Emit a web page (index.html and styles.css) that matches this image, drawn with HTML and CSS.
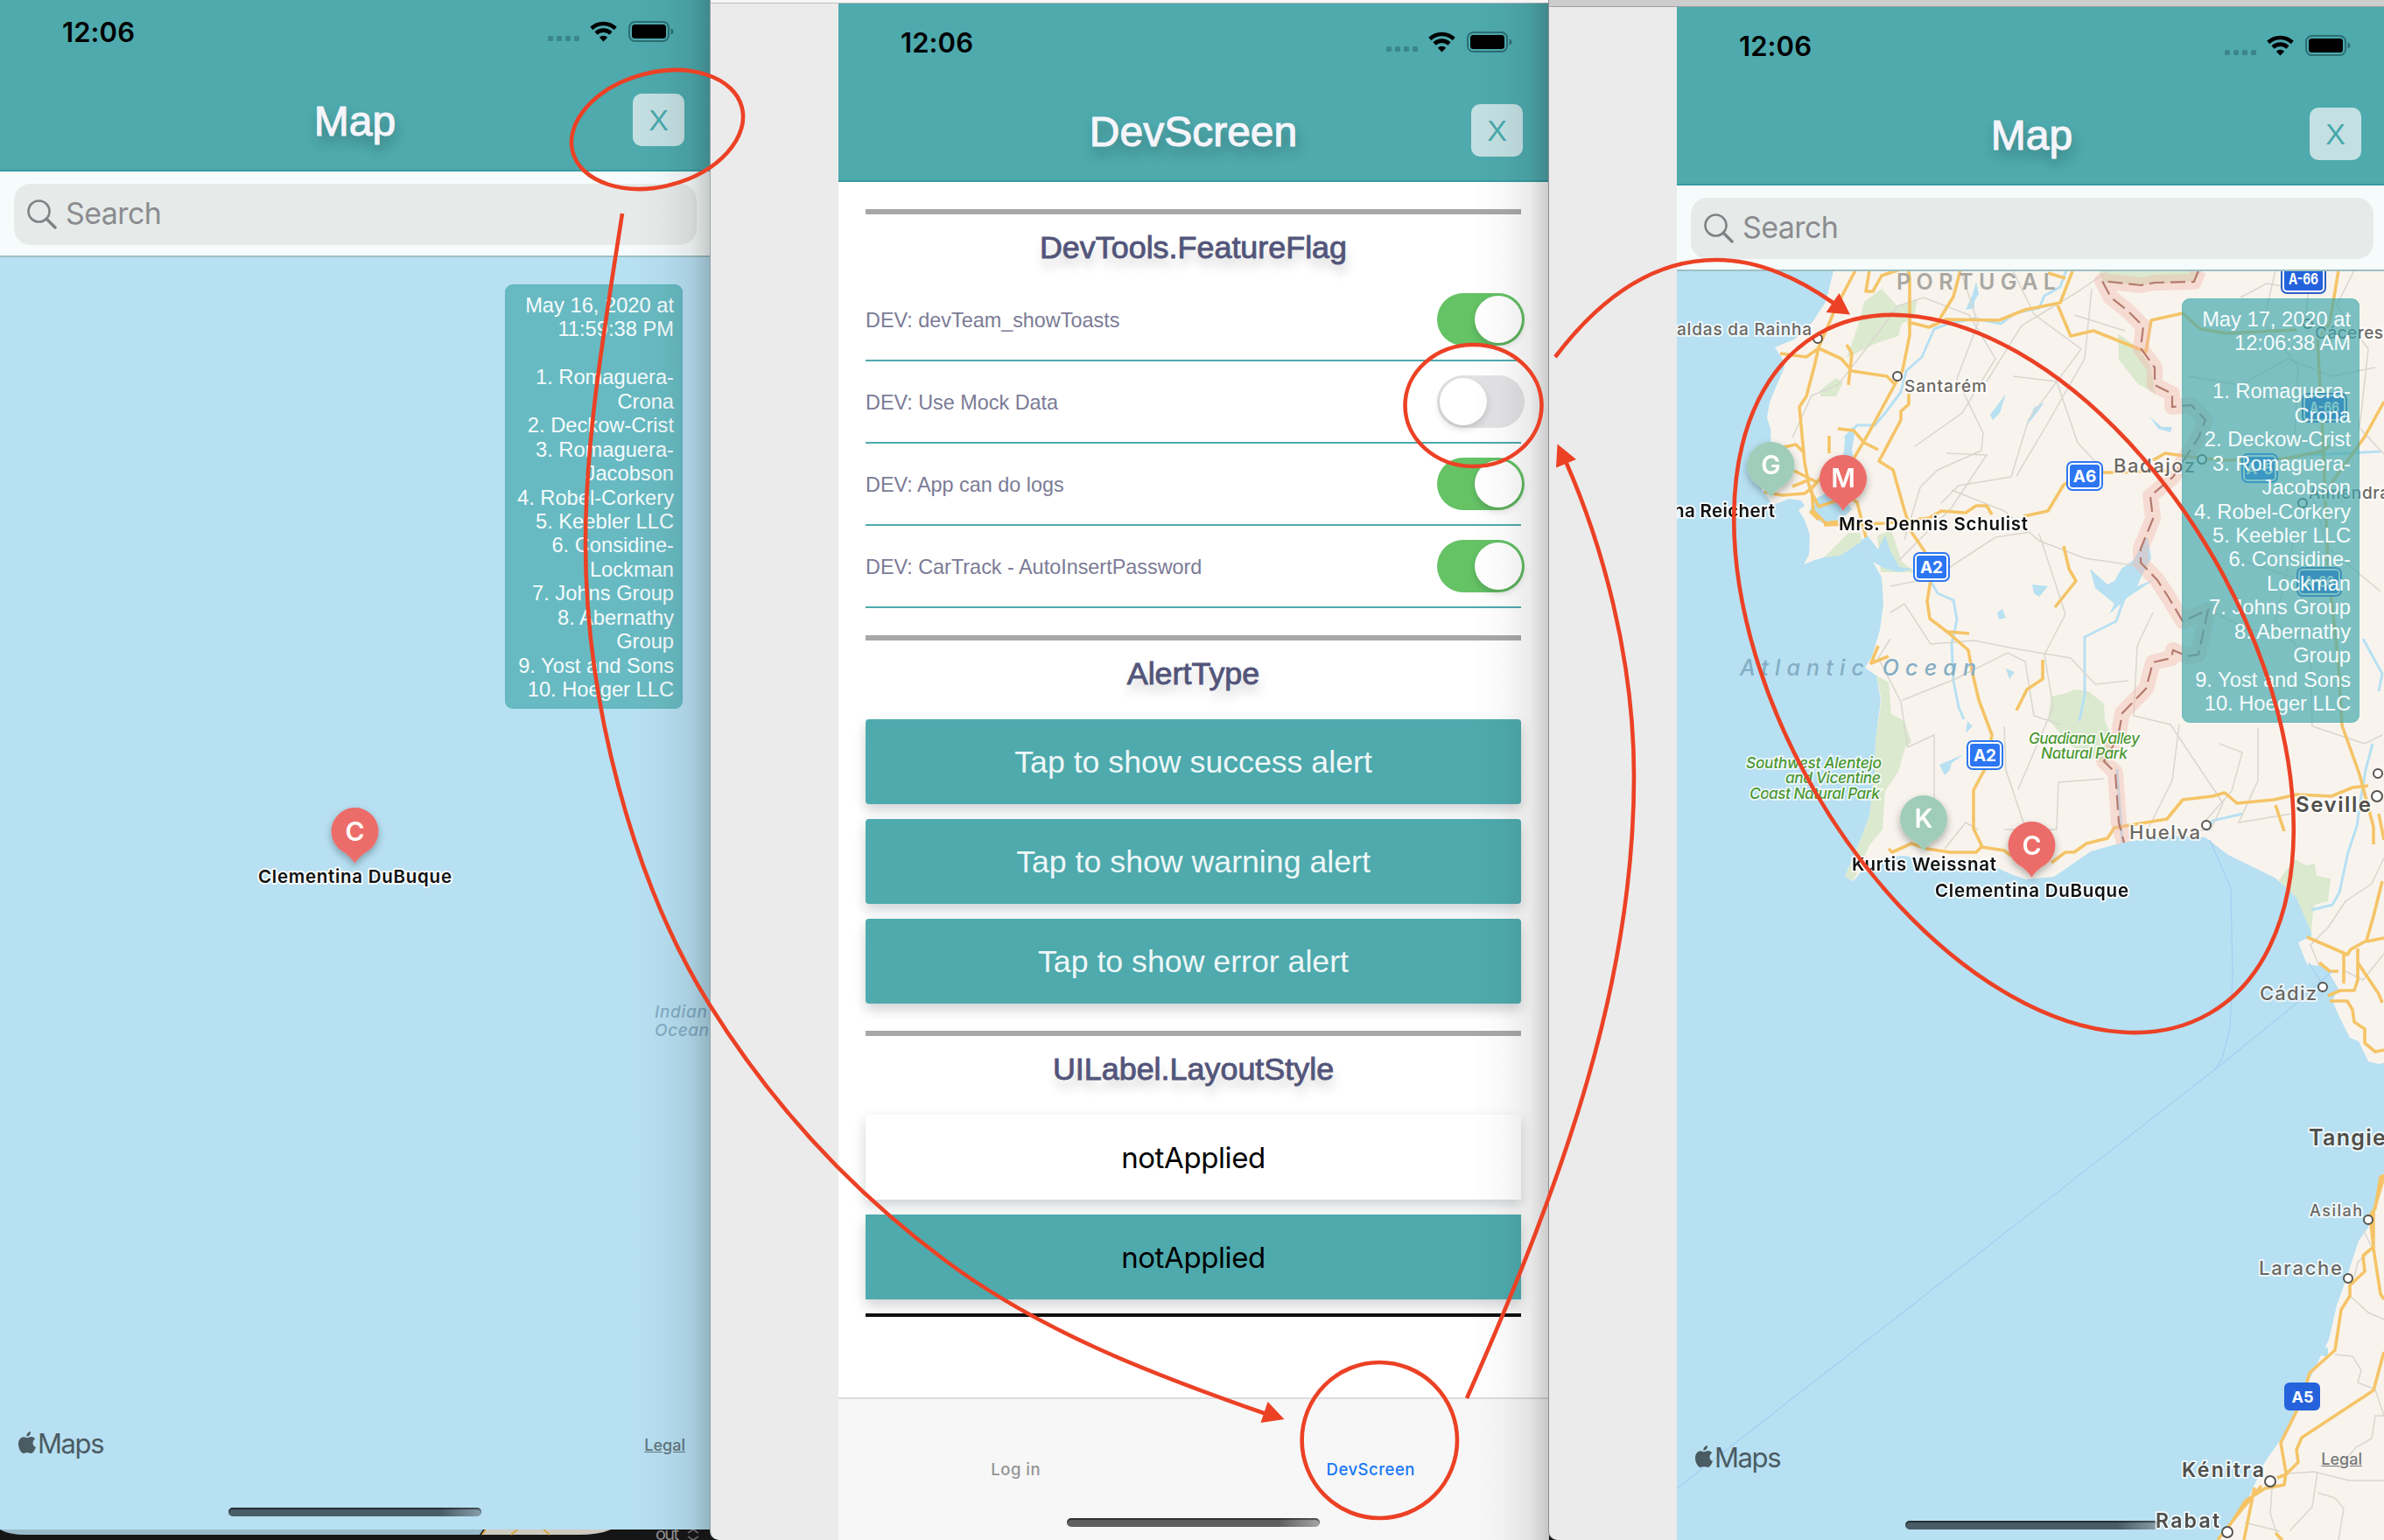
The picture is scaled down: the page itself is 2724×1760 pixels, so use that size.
FILE: index.html
```html
<!DOCTYPE html>
<html lang="en">
<head>
<meta charset="utf-8">
<title>Developer screen walkthrough</title>
<link rel="stylesheet" href="styles.css">
</head>
<body>
<svg class="defs" aria-hidden="true">
  <symbol id="status" viewBox="0 0 144 26">
    <g fill="#3b868b"><rect y="18" width="6" height="6" rx="1.5"/><rect x="10" y="18" width="6" height="6" rx="1.5"/><rect x="20" y="18" width="6" height="6" rx="1.5"/><rect x="30" y="18" width="6" height="6" rx="1.5"/></g>
    <g fill="none" stroke="#000" stroke-width="4.6"><path d="M49.8 9.5a20 20 0 0 1 27.400 0"/><path d="M55 15a12.500 12.500 0 0 1 17 0"/></g>
    <path d="M63.500 24.500l-4.700-4.800a6.800 6.800 0 0 1 9.400 0z"/>
    <rect x="93" y="2" width="45" height="22" rx="6.500" fill="none" stroke="#2b6e73" stroke-width="2"/>
    <rect x="96" y="5" width="39" height="16" rx="3.500"/>
    <path d="M140.500 9.500q3 1 3 3.500t-3 3.500z" fill="#2b6e73"/>
  </symbol>
  <symbol id="glass" viewBox="0 0 34 34"><circle cx="13.500" cy="13.500" r="12" fill="none" stroke="#7f8285" stroke-width="2.600"/><path d="M22 22l10 10" stroke="#7f8285" stroke-width="3.400" stroke-linecap="round"/></symbol>
  <symbol id="apple" viewBox="0 0 20 25"><path fill="#4b5b62" d="M14 0c.4 3-2 5.800-4.600 5.700C9 3 11.300.5 14 0zM10 7.300c1.200 0 2.600-1.300 4.800-1.300 1.800 0 3.400 1 4.400 2.400-4 2.500-3.300 8 .8 9.600C18.600 21.500 16.700 25 14.400 25c-1.600 0-2.300-1-4.200-1s-2.700 1-4.200 1C3.200 25 0 19.500 0 14.600 0 9.200 3 6.200 6 6.200c1.800 0 3 1.100 4 1.100z"/></symbol>
  <symbol id="pin" viewBox="-40 -40 80 90" overflow="visible"><path d="M0-27a27 27 0 0 1 16 48.700C9 26 3 31 0 37c-3-6-9-11-16-15.300A27 27 0 0 1 0-27z" fill="currentColor"/></symbol>
  <filter id="soft" x="-50%" y="-50%" width="200%" height="200%"><feDropShadow dx="0" dy="4" stdDeviation="4" flood-opacity=".3"/></filter>
</svg>

<main class="desktop">
  <section class="window window-left">
    <div class="phone">
      <header class="bar">
        <div class="status"><span class="clock">12:06</span><svg class="signals"><use href="#status"/></svg></div>
        <div class="titlebar"><h1>Map</h1><button class="close">X</button></div>
      </header>
      <div class="search"><div class="field"><svg class="glass"><use href="#glass"/></svg><span>Search</span></div></div>
      <div class="map">
        <svg class="canvas" viewBox="0 294 811 1455">
          <g class="sea" font-size="19"><text x="748" y="1163" textLength="60">Indian</text><text x="748" y="1184" textLength="62">Ocean</text></g>
          <g transform="translate(405.500 950)" class="red" filter="url(#soft)"><use href="#pin" x="-40" y="-40" width="80" height="90"/></g>
          <text class="initial" x="405.500" y="961">C</text>
          <text class="person" x="295" y="1009" textLength="221">Clementina DuBuque</text>
        </svg>
        <aside class="toast">May 16, 2020 at<br>11:59:38 PM<br><br>1. Romaguera-<br>Crona<br>2. Deckow-Crist<br>3. Romaguera-<br>Jacobson<br>4. Robel-Corkery<br>5. Keebler LLC<br>6. Considine-<br>Lockman<br>7. Johns Group<br>8. Abernathy<br>Group<br>9. Yost and Sons<br>10. Hoeger LLC</aside>
        <div class="credit"><svg><use href="#apple"/></svg><span>Maps</span></div>
        <a class="legal">Legal</a>
        <div class="home"></div>
      </div>
    </div>
    <svg class="behind" viewBox="0 0 822 12">
      <rect width="822" height="12" fill="#161616"/>
      <path d="M0 0H552L548 6H30Q10 6 0 0z" fill="#98b9ca"/>
      <path d="M555 0H698Q685 6 660 6H550z" fill="#cfcac0"/>
      <path d="M555 0l-4 6M591 0l-7 6M621 0l7 6" stroke="#d9a648" stroke-width="2"/>
      <text x="749" y="12" font-size="20" textLength="27" fill="#8d8d8d">out</text>
      <path d="M786 4l6-4 6 4M786 8l6 4 6-4" fill="none" stroke="#777" stroke-width="1.500"/>
    </svg>
  </section>

  <section class="window window-mid">
    <div class="phone">
      <header class="bar">
        <div class="status"><span class="clock">12:06</span><svg class="signals"><use href="#status"/></svg></div>
        <div class="titlebar"><h1>DevScreen</h1><button class="close">X</button></div>
      </header>
      <div class="content">
        <section class="group">
          <h2>DevTools.FeatureFlag</h2>
          <div class="flag"><span>DEV: devTeam_showToasts</span><i class="switch on"></i></div>
          <div class="flag"><span>DEV: Use Mock Data</span><i class="switch"></i></div>
          <div class="flag"><span>DEV: App can do logs</span><i class="switch on"></i></div>
          <div class="flag"><span>DEV: CarTrack - AutoInsertPassword</span><i class="switch on"></i></div>
        </section>
        <section class="group">
          <h2>AlertType</h2>
          <div class="stack">
            <button class="action">Tap to show success alert</button>
            <button class="action">Tap to show warning alert</button>
            <button class="action">Tap to show error alert</button>
          </div>
        </section>
        <section class="group">
          <h2>UILabel.LayoutStyle</h2>
          <div class="stack labels">
            <div class="sample">notApplied</div>
            <div class="sample filled">notApplied</div>
          </div>
        </section>
      </div>
      <nav class="tabs"><span>Log in</span><span class="active">DevScreen</span><div class="home"></div></nav>
    </div>
  </section>

  <section class="window window-right">
    <div class="phone">
      <header class="bar">
        <div class="status"><span class="clock">12:06</span><svg class="signals"><use href="#status"/></svg></div>
        <div class="titlebar"><h1>Map</h1><button class="close">X</button></div>
      </header>
      <div class="search"><div class="field"><svg class="glass"><use href="#glass"/></svg><span>Search</span></div></div>
      <div class="map">
        <svg class="canvas" viewBox="1916 310 811 1455">
          <path class="land" d="M2095 309L2090 330 2086 345 2071 368 2050 388 2028 397 2038 412 2039 420 2029 443 2022 460 2019 477 2023 490 2024 515 2013 560 2026 577 2044 570 2058 572 2062 578 2055 583 2062 594 2068 612 2067 634 2061 645 2074 640 2084 637 2100 630 2126 617 2139 640 2150 660 2152 690 2148 720 2139 750 2131 763 2144 772 2149 800 2143 847 2142 887 2136 933 2123 967 2108 1002 2118 1007 2131 990 2150 981 2173 978 2215 983 2250 982 2278 990 2300 1000 2315 1005 2347 1002 2389 973 2425 963 2478 955 2520 957 2546 977 2599 1003 2623 1023 2641 1059 2641 1070 2626 1077 2636 1102 2657 1105 2672 1130 2665 1143 2672 1160 2685 1186 2695 1190 2706 1213 2718 1216 2727 1214V309z"/>
          <path class="land" d="M2727 1325l-9 43-12 35-11 15-14 43-11 31-9 39-23 47-20 51-29 40-21 45-36 50H2727z"/>
          <g class="park">
            <path d="M2150 330l18 20 23-8-4 20-14 8-4 14-25 8-34 17 14-40 6-24z"/>
            <path d="M2080 446l18-14 8 5-8 16-18 0z"/>
            <path d="M2420 381l20 14 17 22 6 34-8-6-12-6-22-28z"/>
            <path d="M2398 309h118l-8 12-60 5-45-3z"/>
            <path d="M2084 637l28-28 14 0 1 10-24 16z"/><path d="M2145 612l16-6 12 36 16 12-40 0z"/>
            <path d="M2144 772l14 8 3 36 15 8 8 24-7 6-8 28-15 22-3 44-15 18-18 40-10-4 15-35 13-34 6-46 1-40 7-47z"/>
            <path d="M2344 796l18-4 8-4 16 2 18 14 1 20 8 18-4 32-24-10-19-12-26-30z"/>
            <path d="M2622 982l-18 24 20 20 17 40 2-24 2-8 15-4 3-26-16-3-2-14-10 2z"/>
          </g>
          <g class="water">
            <path d="M2072 571l18-9 14 4 12 16-16 16-14 2-10-6-8-10z"/>
            <path d="M2098 544q10-20 10-44l8-12 4 2-4 24 4 24-8 8-6-8-2 14z"/>
            <path d="M2126 618l8-6 12 16 8-16 6 18 10 18 16 2-16 4-16-4-14-8z"/>
            <path d="M2246 354l8-18 4-14 3 14-5 8 0 8zM2274 474l12-16 6-8-7 22-8 8zM2316 486l8-20 12-6-12 16zM2456 476l14 12 12 0-2 6-14-4z"/>
            <path d="M2322 668l18 2-10 12-6-4zM2282 700l6-4 4 10-8 2zM2248 824l6 6-8 8zM2216 874l28-12-14 10-2 8-6 6zM2292 764l10 4-6 8z"/>
            <path d="M2446 624l8-10 4 24-10 18-6 14 20-8-30 20-22 20 6-12-22-18-6-22 20 18 8-4 8-14 14-10z"/>
            <path d="M2650 1541l10-1v10l-6 0z"/>
          </g>
          <g class="river">
            <path d="M2108 500l14-14 20 0 12-14 18-24 6-24 18-16 14-32 16-6 30-6 30 6 16-12 28-6 6-14 18-10 8-22 18-6 14 4"/>
            <path d="M2206 664l8 14 18 8 4 22-6 28 2 42 6 30 6 14M2430 676l-12 34-36 18 0 66-6 30M2425 963l-6-84M2700 730l22 40-4 20M2522 950l6-12 34-8M2641 1040l24 -6 8-14 10-46 10-30 5-34 5-30 8-30"/>
            <path d="M2640 520l80-4"/>
          </g>
          <g class="minor">
            <path d="M2048 500l22-48 30-12 48-62 20-28 30-10 52 20 30 50-38 62-54 38M2240 309l20 60-24 64 30 62-2 20-50 22-20 20-18 60M2270 436l40-64 60-36 40-27M2300 309l24 50 54 40-60 80-20 66-60 10-20 20M2300 430l50 6 24 70 30 32M2390 330l-8 80-46 80-32 54M2370 360l58 18M2170 640l60-60 40-60-46-2M2230 560l60 24 40 34 52 20 70 10M2160 670l50-10 70-46 40-6M2330 610l30 92-24 46 10 60-40 94M2160 700l16-10 30 46 50-4 50 10 60 10 28 30 38-4M2160 730l-14 22 26 50 8 52 30-14 0 80M2174 800l60-24 60-30 20 10 10 62 30 10M2290 830l2 50 20 60 4 30M2290 948l60 0 2-54 52-4M2260 948l-14-8-24 30"/>
            <path d="M2460 700l-18 38-4 80 42 10 60 90-14 30-40 4M2490 828l-8 64-30 60M2536 850l26 10-12 44-30 34M2580 832l0 60-22 48 60-10M2620 620l-20 90 40 48 2 72 60 20 20-10M2500 430l60 10 54-30 50 20 50-10M2600 309l-14 60 40 50-4 80M2640 309l-6 60M2690 309l-20 40 36 50-10 90 28 30M2560 340l30-16 60 10M2530 700l40 20 60 4M2640 560l20 66 60 50M2560 640l60 20M2660 1060l20-30 30-20 14-30M2660 1060l-20 20 10 24M2680 1110l20 10 24-30"/>
            <path d="M2684 1480l22 20 18 8M2668 1548l20 2 10 16-4 14 20 8 10 30M2724 1618h-10l-4 26-18 10-20 24M2614 1684l30-2 40 10 40 0M2648 1682l-6 40-26 28M2648 1706l20 6 10 12-6 36M2596 1700l-2 30 10 30M2565 1740l40 10M2700 1405l10 20M2690 1459l4-16 14-14"/>
          </g>
          <g class="road">
            <path d="M2120 309l-22 42-20 46-4 18-10 38-8 12 6 64 6 30 10 20 24-8 12-40 20-34 40-74 8-40 0-66-4-22-10-40M2034 404l30 4 14-10 26 12 12 14 40 6 8 8M2136 309l-4 24 8 0 10-18 30-10M2112 440l4-36-6-10M2180 368l24 6 20-9 60 1 30-12 40-8 14-36M2240 309l-8 30-16 26M2350 346l16 38 26-6 60 24 6-36 36-8 20 18 30 5 80-4M2340 312l20 6M2181 450V462L2172 470V480L2147 527 2163 537 2176 583 2184 608 2199 630 2206 663 2202 687 2205 707 2226 723 2249 743 2254 770 2261 800 2276 840 2269 877 2255 903V947L2265 968M2100 490l18 2 12 14 16 8M2090 498l0 20M2034 512l18-4 10 10M2016 562l20 4 26-2 8-6 14-16 22-6M2048 556l20-8M2050 538l28 14M2070 560l2 24 14 14 14-2M2068 584l10 10"/>
            <path d="M2084 600l70-2 50 -6 14-8 28 2 12-8 12 0 6 10M2110 566l12 8 10 40M2312 590l28-6 18-30 26-14 30 0 64-2M2460 526l14-8 28 4 40 4 70-2 40-8 10-6M2358 624l6 26 8 14-24 30M2334 754l0 22-18 12-12 24M2226 722l24 2M2146 738l-8 20 20-8M2158 970l4 4 22-10 18 6 26 4 30 0 6-6 26 4 8 6"/>
            <path d="M2344 986l16-12 10 0 14-10 24-6 8-12 60-10 18-22 34-4 14-4 14 12 42-4 26-6 40 2 24-10 18-2M2600 920l10 30M2672 309l-10 60-14 20 6 110 6 150 12 110 4 70 20 56 16 60 0 20M2662 555l40-56 22-40M2636 1071l28 12 18 8 4-6 18-10 8-28 10-40M2678 1090l0 34M2694 1084l0 36-4 12-16 0-14 6M2694 1100l24 36 4 10M2650 1100l12 10 10 0M2662 1144l20 0 6 10 2 14 12 8 0 16 12 10 10-2M2704 1076l20-4M2718 930l6 30"/>
            <path d="M2724 1343l-4 2-6 36-6 8 4 36-12 10 2 18-17 16 0 12-10 16-7 46-29 26-9 32-24 48 6 34-2 14-22 4-22 14-26 40M2724 1345l-12 40 0 42 8 52 4 6M2724 1545l-12 44-82 54-6 14 2 14-14 14-10 4M2576 1700l-12 60M2600 1752l8 8M2584 1698l-20 24-30 38"/>
          </g>
          <path class="band" d="M2512 309L2507 322 2462 323 2446 326 2402 321 2412 340 2431 355 2449 373 2446 398 2462 420V440L2482 450V465L2504 463 2520 480 2512 500 2499 520 2483 545 2457 567 2460 593 2446 627V643L2465 663 2478 683 2494 710 2523 697 2512 748 2499 750 2483 743 2481 752 2460 757 2452 787 2425 815 2420 843 2404 870 2417 883 2421 940 2427 963"/>
          <path class="border" d="M2512 309L2507 322 2462 323 2446 326 2402 321 2412 340 2431 355 2449 373 2446 398 2462 420V440L2482 450V465L2504 463 2520 480 2512 500 2499 520 2483 545 2457 567 2460 593 2446 627V643L2465 663 2478 683 2494 710 2523 697 2512 748 2499 750 2483 743 2481 752 2460 757 2452 787 2425 815 2420 843 2404 870 2417 883 2421 940 2427 963"/>
          <path class="ferry" d="M1916 1701L2530 1223 2620 1150 2665 1110M2530 1223l9-13 9-35 3-60-2-100-24-55M2638 1100l20 32"/>
          <g class="dot">
            <circle cx="2077" cy="387" r="5"/><circle cx="2168" cy="430" r="5"/><circle cx="2516" cy="525" r="5"/><circle cx="2637" cy="370" r="5"/><circle cx="2631" cy="575" r="5"/><circle cx="2717" cy="884" r="5"/><circle cx="2716" cy="910" r="6"/><circle cx="2521" cy="943" r="5"/><circle cx="2654" cy="1128" r="5"/><circle cx="2706" cy="1394" r="5"/><circle cx="2683" cy="1461" r="5"/><circle cx="2594" cy="1693" r="6"/><circle cx="2545" cy="1751" r="6"/>
          </g>
          <g class="sea" font-size="25"><text x="1988" y="772" textLength="270">Atlantic Ocean</text></g>
          <text class="country" x="2167" y="331" textLength="182">PORTUGAL</text>
          <g class="city">
            <text x="1916" y="383" font-size="19" textLength="154">aldas da Rainha</text>
            <text x="2176" y="448" font-size="19" textLength="94">Santarém</text>
            <text x="2415" y="540" font-size="22" textLength="93">Badajoz</text>
            <text x="2645" y="387" font-size="19" textLength="78">Cáceres</text>
            <text x="2638" y="570" font-size="19" textLength="92">Almendra</text>
            <text x="2433" y="959" font-size="22" textLength="81">Huelva</text>
            <text x="2582" y="1143" font-size="22" textLength="65">Cádiz</text>
            <text x="2639" y="1390" font-size="18" textLength="60">Asilah</text>
            <text x="2581" y="1457" font-size="22" textLength="95">Larache</text>
          </g>
          <g class="city major">
            <text x="2623" y="928" font-size="24" textLength="86">Seville</text>
            <text x="2638" y="1309" font-size="25" textLength="99">Tangier</text>
            <text x="2493" y="1688" font-size="23" textLength="94">Kénitra</text>
          </g>
          <g class="nature">
            <text x="1995" y="878" textLength="155">Southwest Alentejo</text><text x="2040" y="895" textLength="109">and Vicentine</text><text x="1999" y="913" textLength="149">Coast Natural Park</text>
            <text x="2318" y="850" textLength="127">Guadiana Valley</text><text x="2332" y="867" textLength="99">Natural Park</text>
          </g>
          <g class="shield">
            <g transform="translate(2382 544)"><rect class="rim" x="-20" y="-16" width="40" height="32" rx="6"/><rect x="-17" y="-13" width="34" height="26" rx="3"/><text y="7">A6</text></g>
            <g transform="translate(2207 648)"><rect class="rim" x="-20" y="-16" width="40" height="32" rx="6"/><rect x="-17" y="-13" width="34" height="26" rx="3"/><text y="7">A2</text></g>
            <g transform="translate(2268 863)"><rect class="rim" x="-20" y="-16" width="40" height="32" rx="6"/><rect x="-17" y="-13" width="34" height="26" rx="3"/><text y="7">A2</text></g>
            <g transform="translate(2582 535)"><rect class="rim" x="-20" y="-16" width="40" height="32" rx="6"/><rect x="-17" y="-13" width="34" height="26" rx="3"/><text y="7" font-size="17">A-5</text></g>
            <g class="deep">
              <g transform="translate(2632 319)"><rect class="rim" x="-25" y="-16" width="50" height="32" rx="6"/><rect x="-22" y="-13" width="44" height="26" rx="3"/><text y="6" x="-17" textLength="34" lengthAdjust="spacingAndGlyphs">A-66</text></g>
              <g transform="translate(2656 466)"><rect class="rim" x="-25" y="-16" width="50" height="32" rx="6"/><rect x="-22" y="-13" width="44" height="26" rx="3"/><text y="6" x="-17" textLength="34" lengthAdjust="spacingAndGlyphs">A-66</text></g>
              <g transform="translate(2650 665)"><rect class="rim" x="-25" y="-16" width="50" height="32" rx="6"/><rect x="-22" y="-13" width="44" height="26" rx="3"/><text y="6" x="-17" textLength="34" lengthAdjust="spacingAndGlyphs">A-66</text></g>
              <g transform="translate(2630.500 1596)"><rect x="-20.500" y="-16" width="41" height="32" rx="6"/><text y="7" x="-12">A5</text></g>
            </g>
          </g>
          <g filter="url(#soft)">
            <g transform="translate(2023.500 532)" class="green"><use href="#pin" x="-40" y="-40" width="80" height="90"/></g>
            <g transform="translate(2106 547)" class="red"><use href="#pin" x="-40" y="-40" width="80" height="90"/></g>
            <g transform="translate(2198 936)" class="green"><use href="#pin" x="-40" y="-40" width="80" height="90"/></g>
            <g transform="translate(2321.500 966)" class="red"><use href="#pin" x="-40" y="-40" width="80" height="90"/></g>
          </g>
          <text class="initial" x="2023.500" y="542">G</text><text class="initial" x="2106" y="557">M</text><text class="initial" x="2198" y="946">K</text><text class="initial" x="2321.500" y="977">C</text>
          <g class="person">
            <text x="1912" y="591" textLength="116">na Reichert</text>
            <text x="2101" y="606" textLength="216">Mrs. Dennis Schulist</text>
            <text x="2116" y="995" textLength="165">Kurtis Weissnat</text>
            <text x="2211" y="1025" textLength="221">Clementina DuBuque</text>
          </g>
        </svg>
        <aside class="toast">May 17, 2020 at<br>12:06:38 AM<br><br>1. Romaguera-<br>Crona<br>2. Deckow-Crist<br>3. Romaguera-<br>Jacobson<br>4. Robel-Corkery<br>5. Keebler LLC<br>6. Considine-<br>Lockman<br>7. Johns Group<br>8. Abernathy<br>Group<br>9. Yost and Sons<br>10. Hoeger LLC</aside>
        <div class="credit"><svg><use href="#apple"/></svg><span>Maps</span></div>
        <a class="legal">Legal</a>
        <div class="home"></div>
        <svg class="canvas over" viewBox="1916 310 811 1455"><g class="city major"><text x="2463" y="1746" font-size="23" textLength="73">Rabat</text></g></svg>
      </div>
    </div>
  </section>
</main>

<svg class="annotations" viewBox="0 0 2724 1760">
  <g fill="none" stroke="#ec4125" stroke-width="4.600">
    <ellipse cx="751" cy="148" rx="100" ry="65" transform="rotate(-14.900 751 148)"/>
    <ellipse cx="1683.500" cy="463.500" rx="78" ry="69.500"/>
    <ellipse cx="1576.300" cy="1646" rx="88.700" ry="89"/>
    <ellipse cx="2301" cy="770" rx="448" ry="264" transform="rotate(60.100 2301 770)"/>
    <path d="M711 244C690 380 669 500 669 621C669 800 722 1005 810 1147C884 1266 975 1362 1078 1439C1187 1521 1315 1570 1447 1616"/>
    <path d="M1676 1598C1790 1340 1867 1120 1867 887C1867 750 1830 620 1788 525"/>
    <path d="M1777 408C1830 338 1890 297 1961 297C2010 297 2055 318 2096 347"/>
  </g>
  <path fill="#ec4125" d="M1467.500 1622L1448.600 1602 1440.500 1626zM1779.500 507.500L1778 534.500 1801 525zM2114 359.500L2101.500 335 2086.500 357z"/>
</svg>
</body>
</html>
```
FILE: styles.css
```css
* { box-sizing: border-box; }
body { margin: 0; width: 2724px; height: 1760px; overflow: hidden; position: relative; background: #161616; font-family: "Liberation Sans", Arial, sans-serif; }
button { border: 0; padding: 0; font: inherit; }
.defs { position: absolute; width: 0; height: 0; }
.desktop { display: grid; grid-template-columns: 812px 958px 954px; height: 1760px; }

.window { position: relative; height: 1760px; background: #ebebeb; display: flex; flex-direction: column; min-width: 0; }
.window-left { background: #161616; }
.window-mid { border-top: 3px solid #f6f6f6; padding-left: 146px; border-bottom-left-radius: 10px; box-shadow: -1px 0 #93a4a8; }
.window-right { border-top: 7px solid #cdcdcd; padding-left: 146px; overflow: hidden; box-shadow: -1px 0 #8e8e8e; border-bottom-left-radius: 10px; }
.window-mid::before { content: ""; height: 1px; margin-left: -146px; background: #bdbdbd; flex: none; }
.window-right::before { content: ""; height: 1px; margin-left: -146px; background: #a0a0a0; flex: none; }
.window-left::after, .window-mid::after { content: ""; position: absolute; top: 0; right: 0; bottom: 12px; width: 90px; background: linear-gradient(90deg, transparent, rgba(0,0,0,.025) 40%, rgba(0,0,0,.08) 75%, rgba(0,0,0,.2)); }
.window-mid::after { bottom: 0; }
.behind { display: block; width: 822px; height: 12px; flex: none; font-family: Inter, sans-serif; }

.phone { width: 811px; display: flex; flex-direction: column; flex: 1; min-height: 0; }
.bar { height: 204px; flex: none; background: #4eaaad; border-bottom: 2px solid #369c9f; display: flex; flex-direction: column; }
.window-left .bar { height: 196px; }
.window-left .status { margin-top: -8px; }
.status { height: 89px; display: flex; justify-content: space-between; align-items: center; padding: 1px 41px 0 71px; flex: none; }
.clock { font: 600 31px/40px Inter, sans-serif; letter-spacing: .1px; }
.signals { width: 144px; height: 26px; margin-top: -2px; }
.titlebar { height: 113px; display: grid; grid-template-columns: 88px 1fr 88px; align-items: start; padding-top: 21px; }
.titlebar h1 { grid-column: 2; margin: 0; text-align: center; font-size: 48px; line-height: 73px; font-weight: 400; color: #f5f5fb; -webkit-text-stroke: 1.100px #f5f5fb; text-shadow: 2px 9px 14px rgba(0,0,0,.3); }
.close { width: 59px; height: 60px; margin-top: 5px; border-radius: 10px; background: #c4e0e3; color: #48a9ac; font-size: 34px; }

.search { height: 98px; flex: none; background: #f6fcfb; border-bottom: 2px solid #9dbfc4; padding: 14px 15px 12px 16px; }
.field { height: 70px; border-radius: 19px; background: #e6ebea; display: flex; align-items: center; gap: 10px; padding-left: 15px; color: #8b8c8f; font: 400 34px/40px Inter, sans-serif; letter-spacing: -.6px; }
.field span { margin-top: -2px; }
.glass { width: 34px; height: 34px; }

.map { flex: 1; position: relative; background: #b7e0f2; overflow: hidden; }
.canvas { display: block; width: 811px; height: 1455px; font-family: Inter, sans-serif; }
.over { position: absolute; left: 0; top: 0; }
.toast { position: absolute; top: 31px; right: 31px; width: 203px; height: 485px; border-radius: 9px; padding: 11px 10px 0 0; text-align: right; white-space: nowrap; font-size: 23.700px; line-height: 27.430px; color: #f5fbfc; background: rgba(68,168,172,.69); box-shadow: inset 0 0 2px rgba(30,150,155,.4); }
.credit { position: absolute; left: 21px; bottom: 81px; display: flex; align-items: center; gap: 2px; font: 400 31px/34px Inter, sans-serif; letter-spacing: -1.400px; color: #4b5b62; }
.credit svg { width: 20px; height: 25px; margin-top: -4px; }
.legal { position: absolute; right: 28px; bottom: 84px; font: 500 18px/24px Inter, sans-serif; color: #62757d; text-decoration: underline; }
.home { position: absolute; left: 261px; bottom: 15px; width: 289px; height: 10px; border-radius: 5px; background: linear-gradient(90deg, #4a5d66 84%, #879fab); box-shadow: inset 0 2px 1px rgba(0,0,0,.5); }
.window-right .credit { bottom: 77px; }
.window-right .legal { bottom: 80px; color: #77787a; }
.window-right .home { bottom: 12px; }

.red { color: #ec6c69; }
.green { color: #9fcdb9; }
.initial { fill: #fff; font-size: 30px; font-weight: 600; text-anchor: middle; }
.person { font-size: 20.500px; font-weight: 600; fill: #111; stroke: #fff; stroke-opacity: .85; stroke-width: 4px; stroke-linejoin: round; paint-order: stroke; }
.sea { fill: #84adc5; font-style: italic; font-weight: 500; }
.country { fill: #a9a7a2; font-size: 25px; font-weight: 600; }
.city { fill: #6b6863; font-weight: 500; stroke: #fff; stroke-opacity: .75; stroke-width: 4px; stroke-linejoin: round; paint-order: stroke; }
.major { fill: #504e4a; font-weight: 600; }
.nature { fill: #4b9832; font-size: 17.500px; font-style: italic; font-weight: 500; stroke: #fff; stroke-opacity: .75; stroke-width: 3.500px; paint-order: stroke; }
.land { fill: #f8f4ed; }
.park { fill: #dbe9cf; }
.water { fill: #b7e0f2; }
.river { fill: none; stroke: #b7e0f2; stroke-width: 3px; stroke-linejoin: round; }
.minor { fill: none; stroke: #d9d6cf; stroke-width: 1.500px; }
.road { fill: none; stroke: #f5c467; stroke-width: 3.600px; stroke-linejoin: round; }
.band { fill: none; stroke: #f2b6ab; stroke-opacity: .4; stroke-width: 18px; stroke-linejoin: round; }
.border { fill: none; stroke: #b57a6e; stroke-width: 2.200px; stroke-dasharray: 17 7; }
.ferry { fill: none; stroke: #a5d0f2; stroke-width: 1.300px; }
.dot { fill: #fff; stroke: #55534f; stroke-width: 2px; }
.shield { fill: #2c76f2; font-size: 19px; }
.shield .rim { fill: #fff; stroke: #2c76f2; stroke-width: 2px; }
.shield text { fill: #fff; font-weight: 700; text-anchor: middle; }
.deep rect { fill: #2563dd; }
.deep .rim { fill: #fff; stroke: #2e5fc4; }
.shield .deep text { font-size: 18px; text-anchor: start; }

.window-mid .phone { background: #fff; }
.content { flex: 1; padding: 31px 31px 0; }
.group { border-top: 6px solid #a8a8a8; margin-bottom: 31px; }
.group h2 { margin: 0; height: 74px; line-height: 77px; text-align: center; font-size: 35.900px; font-weight: 400; color: #53557a; -webkit-text-stroke: .9px #53557a; text-shadow: 2px 10px 12px rgba(0,0,0,.2); }
.flag { height: 94px; display: flex; align-items: center; justify-content: space-between; border-bottom: 2px solid #4eaaad; font-size: 23.400px; color: #7b7b96; }
.flag span { padding-top: 2px; }
.switch { width: 100px; height: 60px; margin-right: -4px; border-radius: 30px; background: #e3e3e6; padding: 3px; display: flex; }
.switch::after { content: ""; width: 54px; height: 54px; border-radius: 50%; background: #fff; box-shadow: 0 4px 8px rgba(0,0,0,.16); }
.switch.on { background: #65c366; justify-content: flex-end; }
.stack { display: flex; flex-direction: column; gap: 17px; margin-top: 16px; }
.action { height: 97px; border-radius: 4px; background: #4eaaad; color: #eef7f8; font-size: 35.700px; padding-top: 2px; box-shadow: 0 7px 14px rgba(20,30,40,.2); }
.labels { border-bottom: 4px solid #111; padding-bottom: 16px; }
.sample { height: 97px; line-height: 99px; text-align: center; font-family: Inter, sans-serif; font-size: 33px; letter-spacing: -.4px; color: #000; background: #fff; box-shadow: 0 7px 14px rgba(20,30,40,.2); }
.filled { background: #4eaaad; }
.tabs { position: relative; height: 163px; flex: none; border-top: 2px solid #dcdcdd; background: #f7f7f7; display: grid; grid-template-columns: 1fr 1fr; text-align: center; padding-top: 67px; font: 500 18.500px/26px Inter, sans-serif; letter-spacing: .5px; color: #949494; }
.tabs .active { color: #1877f5; }
.tabs .home { background: linear-gradient(90deg, #606060 84%, #a5a5a5); }

.annotations { position: absolute; left: 0; top: 0; width: 2724px; height: 1760px; pointer-events: none; }
```
